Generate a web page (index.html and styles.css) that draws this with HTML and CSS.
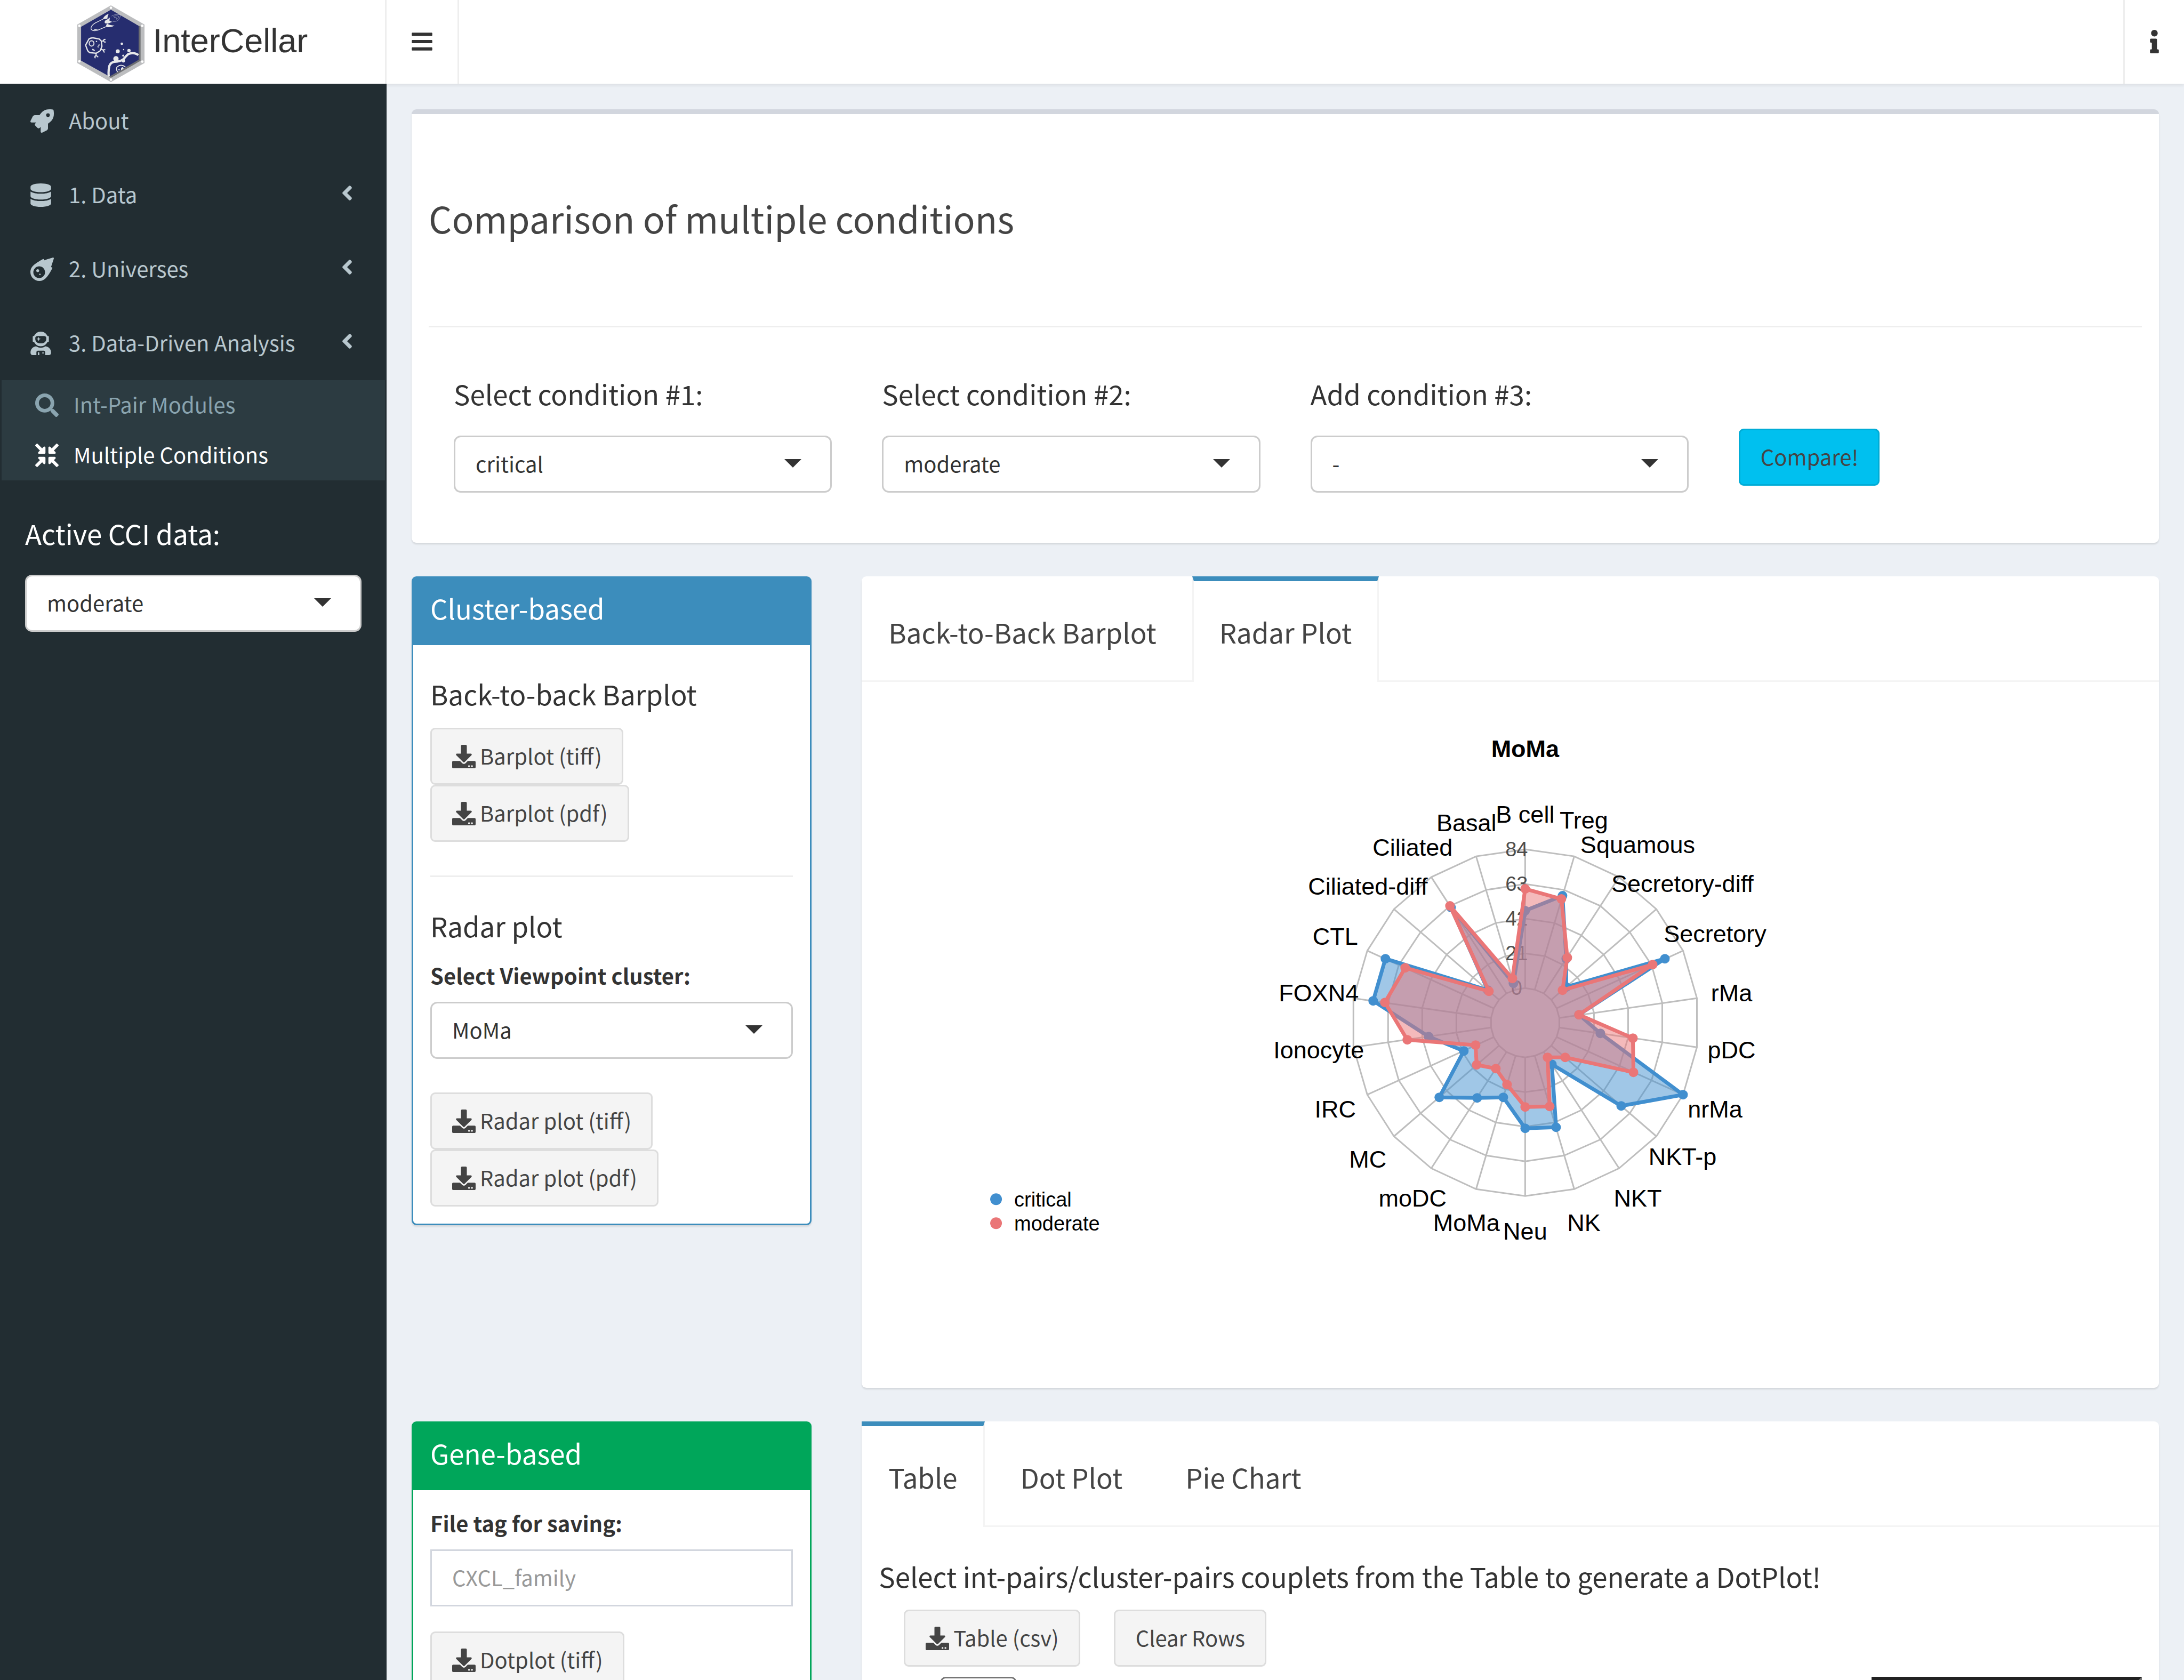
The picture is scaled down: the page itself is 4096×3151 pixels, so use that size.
FILE: index.html
```html
<!DOCTYPE html>
<html lang="en">
<head>
<meta charset="utf-8">
<title>InterCellar</title>
<link rel="stylesheet" href="styles.css">
</head>
<body>
<svg class="sprite" aria-hidden="true">
  <symbol id="i-rocket" viewBox="0 0 512 512"><path d="M505.12019,19.09375c-1.18945-5.53125-6.65819-11-12.207-12.1875C460.716,0,435.507,0,410.40747,0,307.17523,0,245.26909,55.20312,199.05238,128H94.83772c-16.34763.01562-35.55658,11.875-42.88664,26.48438L2.51562,253.29688A28.4,28.4,0,0,0,0,264a24.00867,24.00867,0,0,0,24.00582,24H127.81618l-22.47457,22.46875c-11.36521,11.36133-12.99607,32.25781,0,45.25L156.24582,406.625c11.15623,11.1875,32.15619,13.15625,45.27726,0l22.47457-22.46875V488a24.00867,24.00867,0,0,0,24.00581,24,28.55934,28.55934,0,0,0,10.707-2.51562l98.72834-49.39063c14.62888-7.29687,26.50776-26.5,26.50776-42.85937V312.79688c72.59753-46.3125,128.03493-108.40626,128.03493-211.09376C512.07526,76.5,512.07526,51.29688,505.12019,19.09375ZM384.04033,168A40,40,0,1,1,424.05,128,40.02322,40.02322,0,0,1,384.04033,168Z"/></symbol>
  <symbol id="i-database" viewBox="0 0 448 512"><path d="M448 73.143v45.714C448 159.143 347.667 192 224 192S0 159.143 0 118.857V73.143C0 32.857 100.333 0 224 0s224 32.857 224 73.143zM448 176v102.857C448 319.143 347.667 352 224 352S0 319.143 0 278.857V176c48.125 33.143 136.208 48.572 224 48.572S399.874 209.143 448 176zm0 160v102.857C448 479.143 347.667 512 224 512S0 479.143 0 438.857V336c48.125 33.143 136.208 48.572 224 48.572S399.874 369.143 448 336z"/></symbol>
  <symbol id="i-meteor" viewBox="0 0 512 512"><path d="M511.328,20.8027c-11.60759,38.70264-34.30724,111.70173-61.30311,187.70077,6.99893,2.09372,13.4042,4,18.60653,5.59368a16.06158,16.06158,0,0,1,9.49854,22.906c-22.106,42.29635-82.69047,152.795-142.47819,214.40356-.99984,1.09373-1.99969,2.5-2.99954,3.49995A194.83046,194.83046,0,1,1,57.085,179.41009c.99985-1,2.40588-2,3.49947-3,61.59994-59.90549,171.97367-120.40473,214.37343-142.4982a16.058,16.058,0,0,1,22.90274,9.49988c1.59351,5.09368,3.49947,11.5936,5.5929,18.59351C379.34818,35.00565,452.43074,12.30281,491.12794.70921A16.18325,16.18325,0,0,1,511.328,20.8027ZM319.951,320.00207A127.98041,127.98041,0,1,0,191.97061,448.00046,127.97573,127.97573,0,0,0,319.951,320.00207Zm-127.98041-31.9996a31.9951,31.9951,0,1,1-31.9951-31.9996A31.959,31.959,0,0,1,191.97061,288.00247Zm31.9951,79.999a15.99755,15.99755,0,1,1-15.99755-15.9998A16.04975,16.04975,0,0,1,223.96571,368.00147Z"/></symbol>
  <symbol id="i-astronaut" viewBox="0 0 448 512"><path d="M64 224h13.5c24.7 56.5 80.9 96 146.5 96s121.8-39.5 146.5-96H384c8.8 0 16-7.2 16-16v-96c0-8.8-7.2-16-16-16h-13.5C345.8 39.5 289.6 0 224 0S102.2 39.5 77.5 96H64c-8.8 0-16 7.2-16 16v96c0 8.8 7.2 16 16 16zm40-88c0-22.1 21.5-40 48-40h144c26.5 0 48 17.9 48 40v24c0 53-43 96-96 96h-48c-53 0-96-43-96-96v-24zm72 72l12-36 36-12-36-12-12-36-12 36-36 12 36 12 12 36zm151.600 113.400C297.700 340.700 262.200 352 224 352s-73.700-11.300-103.600-30.600C52.900 328.500 0 385 0 454.400v9.600c0 26.500 21.500 48 48 48h80v-64c0-17.700 14.300-32 32-32h128c17.700 0 32 14.300 32 32v64h80c26.500 0 48-21.500 48-48v-9.600c0-69.400-52.900-125.900-120.400-133zM272 448c-8.800 0-16 7.200-16 16s7.200 16 16 16 16-7.200 16-16-7.200-16-16-16zm-96 0c-8.800 0-16 7.200-16 16v48h32v-48c0-8.800-7.200-16-16-16z"/></symbol>
  <symbol id="i-search" viewBox="0 0 512 512"><path d="M505 442.700L405.300 343c-4.500-4.500-10.600-7-17-7H372c27.600-35.300 44-79.700 44-128C416 93.100 322.900 0 208 0S0 93.100 0 208s93.100 208 208 208c48.300 0 92.700-16.400 128-44v16.300c0 6.400 2.500 12.500 7 17l99.700 99.700c9.400 9.400 24.600 9.400 33.900 0l28.300-28.300c9.400-9.400 9.400-24.600.1-34zM208 336c-70.700 0-128-57.200-128-128 0-70.700 57.200-128 128-128 70.700 0 128 57.200 128 128 0 70.700-57.200 128-128 128z"/></symbol>
  <symbol id="i-compress" viewBox="0 0 512 512"><path d="M200 288H88c-21.400 0-32.100 25.800-17 41l32.900 31-99.200 99.300c-6.200 6.200-6.200 16.400 0 22.600l25.400 25.400c6.200 6.200 16.400 6.200 22.600 0L152 408l31.100 33c15.100 15.100 40.900 4.400 40.900-17V312c0-13.300-10.700-24-24-24zm112-64h112c21.400 0 32.100-25.900 17-41l-33-31 99.300-99.300c6.200-6.200 6.200-16.400 0-22.600L481.900 4.700c-6.200-6.200-16.400-6.200-22.600 0L360 104l-31.100-33C313.800 55.900 288 66.600 288 88v112c0 13.300 10.700 24 24 24zm96 136l33-31.100c15.100-15.100 4.400-40.900-17-40.900H312c-13.300 0-24 10.700-24 24v112c0 21.400 25.900 32.100 41 17l31-32.900 99.300 99.300c6.200 6.200 16.400 6.200 22.600 0l25.400-25.400c6.200-6.200 6.200-16.400 0-22.600L408 360zM183 71.100L152 104 52.700 4.700c-6.200-6.200-16.400-6.200-22.600 0L4.700 30.100c-6.200 6.200-6.200 16.400 0 22.600L104 152l-33 31.100C55.900 198.200 66.600 224 88 224h112c13.300 0 24-10.700 24-24V88c0-21.300-25.900-32-41-16.900z"/></symbol>
  <symbol id="i-download" viewBox="0 0 512 512"><path d="M216 0h80c13.300 0 24 10.700 24 24v168h87.700c17.800 0 26.700 21.500 14.100 34.100L269.700 378.300c-7.500 7.500-19.800 7.500-27.300 0L90.100 226.100c-12.600-12.600-3.700-34.100 14.100-34.100H192V24c0-13.300 10.700-24 24-24zm296 376v112c0 13.300-10.700 24-24 24H24c-13.300 0-24-10.700-24-24V376c0-13.300 10.700-24 24-24h146.700l49 49c20.100 20.100 52.500 20.100 72.600 0l49-49H488c13.300 0 24 10.700 24 24zm-124 88c0-11-9-20-20-20s-20 9-20 20 9 20 20 20 20-9 20-20zm64 0c0-11-9-20-20-20s-20 9-20 20 9 20 20 20 20-9 20-20z"/></symbol>
  <symbol id="i-info" viewBox="0 0 192 512"><path d="M20 424.229h20V279.771H20c-11.046 0-20-8.954-20-20V212c0-11.046 8.954-20 20-20h112c11.046 0 20 8.954 20 20v212.229h20c11.046 0 20 8.954 20 20V492c0 11.046-8.954 20-20 20H20c-11.046 0-20-8.954-20-20v-47.771c0-11.046 8.954-20 20-20zM96 0C56.235 0 24 32.235 24 72s32.235 72 72 72 72-32.235 72-72S135.764 0 96 0z"/></symbol>
  <symbol id="i-bars" viewBox="0 0 448 512"><path d="M16 132h416c8.837 0 16-7.163 16-16V76c0-8.837-7.163-16-16-16H16C7.163 60 0 67.163 0 76v40c0 8.837 7.163 16 16 16zm0 160h416c8.837 0 16-7.163 16-16v-40c0-8.837-7.163-16-16-16H16c-8.837 0-16 7.163-16 16v40c0 8.837 7.163 16 16 16zm0 160h416c8.837 0 16-7.163 16-16v-40c0-8.837-7.163-16-16-16H16c-8.837 0-16 7.163-16 16v40c0 8.837 7.163 16 16 16z"/></symbol>
  <symbol id="i-left" viewBox="0 0 256 512"><path d="M31.700 239l136-136c9.400-9.400 24.600-9.400 33.900 0l22.600 22.600c9.400 9.400 9.400 24.600 0 33.900L127.900 256l96.400 96.400c9.400 9.400 9.400 24.600 0 33.900L201.700 409c-9.400 9.400-24.600 9.400-33.900 0l-136-136c-9.500-9.400-9.500-24.600-.1-34z"/></symbol>
  <symbol id="i-caret" viewBox="0 0 10 5"><path d="M0 0h10L5 5z"/></symbol>
</svg>

<div class="app">
  <header class="topbar">
    <a class="brand" href="#">
      <svg class="brand-logo" viewBox="72 38 480 548" aria-hidden="true">
        <path fill="#bcbdbf" d="M312 38L552 175V450L312 586L72 450V175Z"/>
        <path fill="#6d6e71" d="M500 180L524 188V434L312 556L296 546Z"/>
        <path fill="#262d6f" d="M312 69L510 184V427L302 546L99 433V191Z"/>
        <g fill="#fff"><circle cx="312" cy="55" r="9"/><circle cx="312" cy="569" r="9"/><circle cx="87" cy="184" r="9"/><circle cx="87" cy="438" r="9"/><circle cx="536" cy="184" r="9"/><circle cx="536" cy="440" r="9"/></g>
        <g fill="none" stroke="#e7e8ea" stroke-linecap="round">
          <path stroke-width="5" d="M258 135L200 164Q166 184 170 208Q180 224 216 216L285 187"/>
          <path stroke-width="4" d="M191 208Q204 214 218 208"/>
          <path stroke-width="9" stroke-linejoin="round" d="M156 277Q176 266 200 273L228 278L243 292L248 330L236 362L208 380L160 376L146 362L131 322Z"/>
          <ellipse stroke-width="7" cx="174" cy="310" rx="17" ry="19"/>
          <path stroke-width="8" d="M246 294L260 291M270 281Q256 284 260 292Q264 303 272 300M243 352L256 357M269 355Q256 353 258 361L264 372M205 380L207 396M199 413Q195 402 204 398Q214 398 219 406"/>
          <path stroke-width="6" d="M227 318Q231 323 224 327Q216 330 221 337"/>
          <path stroke-width="4" d="M180 351Q188 349 190 356Q200 358 194 363Q182 364 180 351"/>
          <path stroke-width="16" stroke-linecap="butt" d="M297 546Q292 508 301 470Q310 446 336 441Q376 442 402 422Q420 400 436 386Q476 370 508 393"/>
          <path stroke-width="7" stroke-linecap="butt" d="M360 514Q346 494 356 478Q384 454 415 478"/>
          <path stroke-width="2" stroke-dasharray="5 3" d="M318 114Q344 98 380 106Q376 144 348 152L328 154M330 118Q350 108 368 116Q364 134 350 142M336 124Q356 120 352 136"/>
        </g>
        <g fill="#e7e8ea">
          <path d="M296 98Q266 110 254 135Q274 137 287 132Q287 118 296 98ZM305 124Q292 136 272 146Q262 158 272 166Q288 170 302 164Q314 158 326 156Q312 154 302 147Q302 138 305 124ZM286 168Q300 180 338 182Q312 198 284 193Q276 186 278 179Z"/>
          <circle cx="209" cy="296" r="5"/><circle cx="390" cy="312" r="9"/><circle cx="403" cy="354" r="5"/><circle cx="361" cy="366" r="14"/><circle cx="441" cy="361" r="12"/><circle cx="400" cy="397" r="7"/><circle cx="348" cy="420" r="19"/><circle cx="401" cy="434" r="12"/><circle cx="370" cy="498" r="5"/><path d="M384 502Q381 482 395 479Q405 484 402 491Z"/>
        </g>
      </svg>
      <span>InterCellar</span>
    </a>
    <button class="bar-button toggle" type="button" aria-label="Toggle navigation"><svg class="icon narrow"><use href="#i-bars"/></svg></button>
    <button class="bar-button about" type="button" aria-label="Information"><svg class="icon thin"><use href="#i-info"/></svg></button>
  </header>

  <div class="layout">
    <aside class="sidebar">
      <nav>
        <ul class="menu">
          <li><a href="#"><span class="menu-icon"><svg class="icon"><use href="#i-rocket"/></svg></span><span class="text">About</span></a></li>
          <li><a href="#"><span class="menu-icon"><svg class="icon narrow"><use href="#i-database"/></svg></span><span class="text">1. Data</span><svg class="icon chevron"><use href="#i-left"/></svg></a></li>
          <li><a href="#"><span class="menu-icon"><svg class="icon"><use href="#i-meteor"/></svg></span><span class="text">2. Universes</span><svg class="icon chevron"><use href="#i-left"/></svg></a></li>
          <li><a href="#"><span class="menu-icon"><svg class="icon narrow"><use href="#i-astronaut"/></svg></span><span class="text">3. Data-Driven Analysis</span><svg class="icon chevron"><use href="#i-left"/></svg></a>
            <ul class="submenu">
              <li><a href="#"><span class="menu-icon"><svg class="icon"><use href="#i-search"/></svg></span><span class="text">Int-Pair Modules</span></a></li>
              <li><a class="current" href="#"><span class="menu-icon"><svg class="icon"><use href="#i-compress"/></svg></span><span class="text">Multiple Conditions</span></a></li>
            </ul>
          </li>
        </ul>
      </nav>
      <div class="active-data">
        <label class="title-label" for="active">Active CCI data:</label>
        <div class="select"><select id="active"><option>moderate</option></select><svg class="caret"><use href="#i-caret"/></svg></div>
      </div>
    </aside>

    <main class="content">
      <section class="box intro">
        <h1>Comparison of multiple conditions</h1>
        <hr>
        <form class="conditions">
          <div class="field"><label class="title-label" for="c1">Select condition #1:</label>
            <div class="select"><select id="c1"><option>critical</option></select><svg class="caret"><use href="#i-caret"/></svg></div></div>
          <div class="field"><label class="title-label" for="c2">Select condition #2:</label>
            <div class="select"><select id="c2"><option>moderate</option></select><svg class="caret"><use href="#i-caret"/></svg></div></div>
          <div class="field"><label class="title-label" for="c3">Add condition #3:</label>
            <div class="select"><select id="c3"><option>-</option></select><svg class="caret"><use href="#i-caret"/></svg></div></div>
          <div class="field submit"><button class="btn info" type="button"><span class="text">Compare!</span></button></div>
        </form>
      </section>

      <div class="row">
        <section class="box panel primary">
          <h2>Cluster-based</h2>
          <div class="panel-body">
            <h3>Back-to-back Barplot</h3>
            <div class="stack">
              <button class="btn" type="button"><svg class="icon"><use href="#i-download"/></svg><span class="text">Barplot (tiff)</span></button>
              <button class="btn" type="button"><svg class="icon"><use href="#i-download"/></svg><span class="text">Barplot (pdf)</span></button>
            </div>
            <hr>
            <h3>Radar plot</h3>
            <label class="small-label" for="viewpoint">Select Viewpoint cluster:</label>
            <div class="select wide-gap"><select id="viewpoint"><option>MoMa</option></select><svg class="caret"><use href="#i-caret"/></svg></div>
            <div class="stack">
              <button class="btn" type="button"><svg class="icon"><use href="#i-download"/></svg><span class="text">Radar plot (tiff)</span></button>
              <button class="btn" type="button"><svg class="icon"><use href="#i-download"/></svg><span class="text">Radar plot (pdf)</span></button>
            </div>
          </div>
        </section>
        <section class="box">
          <ul class="tabs">
            <li><a href="#">Back-to-Back Barplot</a></li>
            <li class="active"><a href="#">Radar Plot</a></li>
          </ul>
          <div class="pane">
            <svg id="radar" class="radar" viewBox="0 0 2368 1260" role="img" aria-label="Radar plot for MoMa"></svg>
          </div>
        </section>
      </div>

      <div class="row">
        <section class="box panel success">
          <h2>Gene-based</h2>
          <div class="panel-body compact">
            <label class="small-label" for="tag">File tag for saving:</label>
            <input class="text-input" id="tag" type="text" placeholder="CXCL_family">
            <div class="stack">
              <button class="btn" type="button"><svg class="icon"><use href="#i-download"/></svg><span class="text">Dotplot (tiff)</span></button>
            </div>
          </div>
        </section>
        <section class="box">
          <ul class="tabs">
            <li class="active"><a href="#">Table</a></li>
            <li><a href="#">Dot Plot</a></li>
            <li><a href="#">Pie Chart</a></li>
          </ul>
          <div class="pane table-pane">
            <h3>Select int-pairs/cluster-pairs couplets from the Table to generate a DotPlot!</h3>
            <div class="actions">
              <button class="btn" type="button"><svg class="icon"><use href="#i-download"/></svg><span class="text">Table (csv)</span></button>
              <button class="btn" type="button"><span class="text">Clear Rows</span></button>
            </div>
            <div class="table-tools">
              <select class="length" aria-label="Rows per page"><option></option></select>
              <input class="filter" type="search" aria-label="Search">
            </div>
          </div>
        </section>
      </div>
    </main>
  </div>
</div>
<script src="radar.js"></script>
</body>
</html>
```
FILE: styles.css
```css
* { box-sizing: border-box; }

body {
  margin: 0;
  background: #ecf0f5;
  color: #333;
  font: 400 40px/57px "Noto Sans CJK SC", "Open Sans", sans-serif;
}

h1, h2, h3 { margin: 0; font-weight: 400; }
h2, h3, .title-label { font-size: 51px; line-height: 56px; }
ul { margin: 0; padding: 0; list-style: none; }
a { color: inherit; text-decoration: none; }
hr { height: 3px; margin: 0; border: 0; background: #eee; }
button, select, input { margin: 0; font: inherit; color: inherit; }

.sprite { display: none; }
.icon { flex: none; width: 44px; height: 44px; fill: currentColor; }
.icon.narrow { width: 39px; }
.icon.thin { width: 17px; }
.text { padding-bottom: 3px; }

.app { display: flex; flex-direction: column; height: 100vh; overflow: hidden; }

/* top bar */
.topbar {
  flex: none;
  z-index: 1;
  display: flex;
  height: 157px;
  background: #fff;
  box-shadow: 0 3px 6px rgba(0, 0, 0, .08);
}
.brand {
  display: flex;
  align-items: center;
  justify-content: center;
  gap: 16px;
  width: 725px;
  border-right: 3px solid #eee;
  font: 400 63px/72px "Liberation Sans", Arial, sans-serif;
}
.brand span { padding-bottom: 5px; }
.brand-logo { width: 126px; height: 144px; margin-top: 6px; }
.bar-button {
  display: flex;
  align-items: center;
  padding: 0 47px 2px;
  border: 0;
  background: none;
}
.toggle { border-right: 3px solid #eee; }
.about { margin-left: auto; border-left: 3px solid #eee; }

/* sidebar */
.layout { flex: 1; display: flex; min-height: 0; }
.sidebar { z-index: 2; flex: none; width: 725px; background: #222d32; color: #b8c7ce; }
.menu a { display: flex; align-items: center; gap: 9px; height: 139px; padding: 0 63px 0 57px; }
.menu-icon { display: flex; width: 63px; }
.chevron { width: 22px; margin: 0 0 8px auto; }
.submenu { margin: 0 3px; background: #2c3b41; color: #8aa4af; }
.submenu a { height: 94px; padding: 0 63px; }
.submenu .current { color: #fff; }
.active-data { display: flex; flex-direction: column; gap: 50px; padding: 71px 47px; color: #fff; }

/* form controls */
.select { display: grid; color: #333; }
.select > * { grid-area: 1 / 1; }
.select select {
  appearance: none;
  width: 100%;
  height: 107px;
  padding: 0 110px 3px 38px;
  border: 3px solid #ccc;
  border-radius: 13px;
  background: #fff;
}
.caret {
  justify-self: end;
  align-self: center;
  width: 32px;
  height: 16px;
  margin: 0 57px 4px 0;
  fill: #333;
  pointer-events: none;
}
.text-input {
  width: 100%;
  height: 107px;
  margin-bottom: 47px;
  padding: 0 38px 3px;
  border: 3px solid #d2d6de;
  border-radius: 0;
  background: #fff;
}
.text-input::placeholder { color: #999; opacity: 1; }
.btn {
  display: flex;
  align-items: center;
  gap: 8px;
  height: 107px;
  padding: 0 37px 0 38px;
  border: 3px solid #ddd;
  border-radius: 9px;
  background: #f4f4f4;
  color: #444;
  white-space: nowrap;
}
.btn.info { border-color: #00acd6; background: #00c0ef; }
.stack { display: flex; flex-direction: column; align-items: flex-start; }
.small-label { display: block; margin-bottom: 20px; font-weight: 700; line-height: 59px; }
.wide-gap { margin-bottom: 63px; }

/* content */
.content { flex: 1; min-width: 0; padding: 48px 47px 0; display: flex; flex-direction: column; gap: 63px; }
.box { flex: none; border-radius: 9px; background: #fff; box-shadow: 0 3px 3px rgba(0, 0, 0, .1); }

.intro { padding: 157px 32px 94px; border-top: 9px solid #d2d6de; }
.intro h1 { margin-bottom: 165px; color: #444; font-size: 68px; line-height: 75px; }
.conditions { display: grid; grid-template-columns: repeat(4, 1fr); padding-top: 96px; }
.field { display: flex; flex-direction: column; gap: 51px; padding: 0 47px; }
.submit { align-items: flex-start; padding-top: 94px; }

.row { display: grid; grid-template-columns: 375fr 1216fr; gap: 94px; align-items: start; }
.panel { border: 3px solid; }
.panel h2 { padding: 28px 32px 42px; color: #fff; }
.primary { border-color: #3c8dbc; }
.primary h2 { background: #3c8dbc; }
.success { border-color: #00a65a; }
.success h2 { background: #00a65a; }
.panel-body { padding: 63px 32px 32px; }
.panel-body.compact { padding-top: 32px; }
.panel-body h3 { margin-bottom: 36px; }
.panel-body hr { margin: 63px 0; }

.tabs { display: flex; border-bottom: 3px solid #f4f4f4; color: #444; font-size: 51px; line-height: 56px; }
.tabs li {
  margin: 0 16px -3px 0;
  border: solid transparent;
  border-width: 9px 3px 0;
}
.tabs .active { border-color: #3c8dbc #f4f4f4; background: #fff; }
.tabs a { display: block; padding: 67px 48px 66px; }
.tabs li:first-child { border-left-width: 0; }
.tabs li:first-child a { padding-left: 50px; }

.pane { padding: 32px; }
.radar { display: block; width: 100%; height: auto; font-family: "Liberation Sans", Arial, sans-serif; }
.radar .grid { fill: none; stroke: #bebebe; stroke-width: 3; }
.radar text { font-size: 45px; text-anchor: middle; fill: #000; }
.radar .title { font-weight: 700; }
.radar .tick { font-size: 38px; fill: #4d4d4d; }
.radar .legend { font-size: 38px; text-anchor: start; }
.radar .area { stroke-width: 7; stroke-linejoin: round; fill-opacity: .5; }
.radar .critical { stroke: #418fcf; fill: #418fcf; }
.radar .moderate { stroke: #ea7677; fill: #ea7677; }
.radar circle { stroke-width: 0; }

.table-pane { padding-top: 64px; }
.actions { display: flex; gap: 63px; padding: 35px 47px 19px; }
.table-tools { display: flex; justify-content: space-between; align-items: flex-start; padding-left: 116px; }
.length { appearance: none; width: 142px; height: 76px; border: 3px solid #767676; border-radius: 9px; background: #fff; }
.filter { appearance: none; width: 507px; height: 90px; border: 6px solid #222; border-right-color: #767676; border-bottom-color: #767676; border-radius: 0; }
```
FILE: radar.js
```js
const data = [
  ['B cell', 47, 60], ['Basal', 4, 7], ['Ciliated', 62, 63], ['Ciliated-diff', 9, 8],
  ['CTL', 72, 59], ['FOXN4', 72, 65], ['Ionocyte', 38, 51], ['IRC', 20, 12],
  ['MC', 48, 18], ['moDC', 33, 12], ['MoMa', 26, 18], ['Neu', 43, 30],
  ['NK', 45, 32], ['NKT', 9, 4], ['NKT-p', 56, 11], ['nrMa', 84, 51],
  ['pDC', 25, 45], ['rMa', 12, 12], ['Secretory', 72, 64], ['Secretory-diff', 12, 9],
  ['Squamous', 25, 26], ['Treg', 59, 57]
];
const max = 84, levels = 5, radius = 325, cx = 1212, cy = 607;
const svg = document.getElementById('radar');

function add(tag, attrs, text) {
  const el = document.createElementNS('http://www.w3.org/2000/svg', tag);
  for (const k in attrs) el.setAttribute(k, attrs[k]);
  if (text !== undefined) el.textContent = text;
  svg.appendChild(el);
}
function at(i, r) {
  const a = 2 * Math.PI * i / data.length;
  return [Math.round(cx - r * Math.sin(a)), Math.round(cy - r * Math.cos(a))];
}
const ring = f => data.map((d, i) => at(i, f(d))).join(' ');
const scale = v => radius * (1 + (levels - 1) * v / max) / levels;

for (let l = 1; l <= levels; l++) add('polygon', { class: 'grid', points: ring(() => radius * l / levels) });
data.forEach((d, i) => {
  const [x1, y1] = at(i, radius / levels), [x2, y2] = at(i, radius);
  add('line', { class: 'grid', x1, y1, x2, y2 });
});
for (let l = 0; l < levels; l++) {
  const v = max * l / (levels - 1);
  add('text', { class: 'tick', x: cx - 16, y: cy + 13 - Math.round(scale(v)) }, v);
}
['critical', 'moderate'].forEach((name, s) => {
  add('polygon', { class: 'area ' + name, points: ring(d => scale(d[s + 1])) });
  data.forEach((d, i) => {
    const [x, y] = at(i, scale(d[s + 1]));
    add('circle', { class: name, cx: x, cy: y, r: 9 });
  });
  add('circle', { class: name, cx: 220, cy: 938 + 45 * s, r: 11 });
  add('text', { class: 'legend', x: 254, y: 952 + 45 * s }, name);
});
// axis names are centred on their own height, so those with descenders sit higher
data.forEach((d, i) => {
  const [x, y] = at(i, 391);
  add('text', { x, y: y + (/[gpqy]/.test(d[0]) ? 11 : 16) }, d[0]);
});
add('text', { class: 'title', x: cx, y: 109 }, 'MoMa');
```
